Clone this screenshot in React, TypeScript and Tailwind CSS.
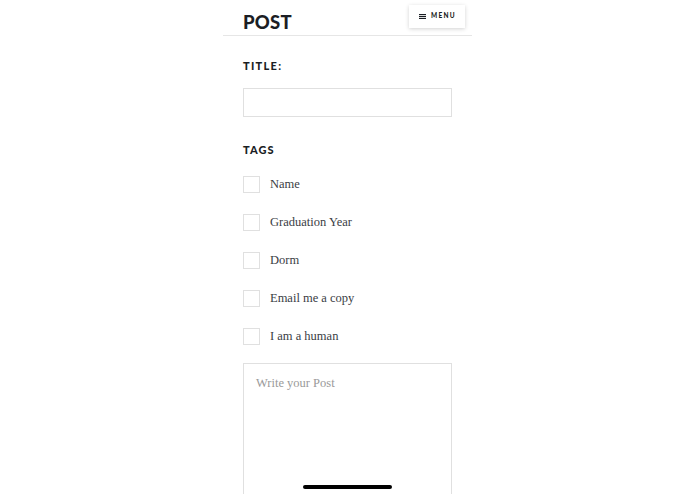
import React from "react";

const tags = ["Name", "Graduation Year", "Dorm", "Email me a copy", "I am a human"];

export default function App() {
  return (
    <div className="relative w-full h-[494px] overflow-hidden bg-white">
      <div className="ml-[223px] w-[249px] flex flex-col">
        <header className="h-[36px] border-b border-[#e6e6e6] flex items-start justify-between pl-5 pr-[7px] shrink-0">
          <h1
            className="mt-[10px] text-[18.5px] leading-[24px] font-black tracking-[0.2px] text-[#1b1e24]"
            style={{ fontFamily: 'Lato, sans-serif' }}
          >
            POST
          </h1>
          <button
            className="mt-[5px] h-[23px] w-[56px] bg-white shadow-[0_1px_4px_rgba(0,0,0,0.18)] flex items-center justify-center gap-[5px] pl-[1px] text-[#1b1e24]"
            style={{ fontFamily: 'Lato, sans-serif' }}
          >
            <svg width="7" height="5" viewBox="0 0 7 5">
              <rect x="0" y="0" width="7" height="1.1" fill="currentColor" />
              <rect x="0" y="1.95" width="7" height="1.1" fill="currentColor" />
              <rect x="0" y="3.9" width="7" height="1.1" fill="currentColor" />
            </svg>
            <span className="text-[6.5px] font-black tracking-[1.3px] leading-none">MENU</span>
          </button>
        </header>
        <div className="px-5 flex flex-col" style={{ fontFamily: 'Lato, sans-serif' }}>
          <div className="mt-[22px] text-[11px] leading-[16px] font-black tracking-[1.3px] text-[#1b1e24]">TITLE:</div>
          <div className="mt-[14px] h-[29px] w-[209px] border border-[#e0e0e0]"></div>
          <div className="mt-[25px] text-[11px] leading-[16px] font-black tracking-[1.1px] text-[#1b1e24]">TAGS</div>
          <div className="mt-[18px] flex flex-col gap-[21px]">
            {tags.map((t) => (
              <div key={t} className="flex items-center h-[17px]">
                <div className="w-[17px] h-[17px] border border-[#e0e0e0] bg-white shrink-0"></div>
                <span
                  className="ml-[10px] text-[12.5px] text-[#3a3d44] leading-[17px]"
                  style={{ fontFamily: '"Liberation Serif", serif' }}
                >
                  {t}
                </span>
              </div>
            ))}
          </div>
          <div className="mt-[18px] h-[200px] w-[209px] border border-[#e0e0e0] px-3 pt-[5px]">
            <span className="text-[12.5px] text-[#9a9a9a] leading-[16px]" style={{ fontFamily: '"Liberation Serif", serif' }}>
              Write your Post
            </span>
          </div>
        </div>
      </div>
      <div className="absolute left-[303px] top-[485px] w-[89px] h-[4px] rounded-full bg-black"></div>
    </div>
  );
}
